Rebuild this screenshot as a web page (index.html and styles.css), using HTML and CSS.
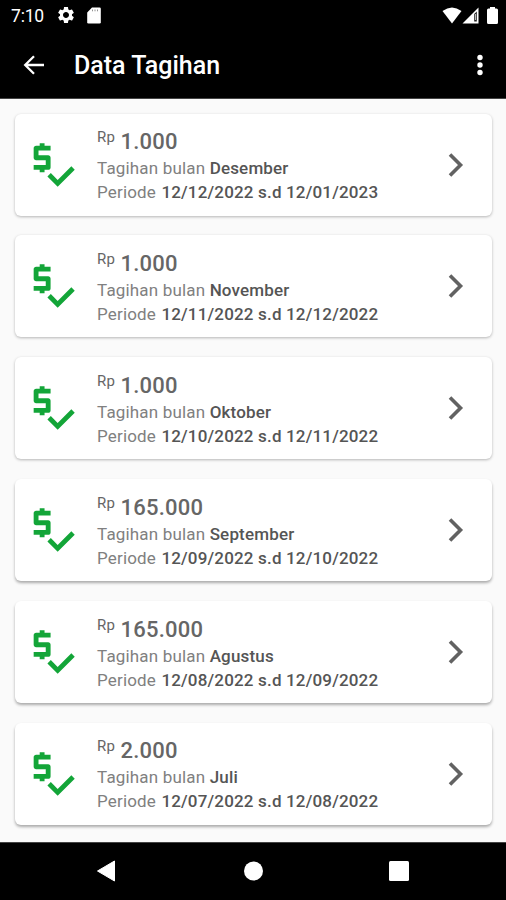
FILE: index.html
```html
<!DOCTYPE html>
<html lang="id">
<head>
    <meta charset="UTF-8">
    <title>Data Tagihan</title>
    <link rel="stylesheet" href="styles.css">
</head>
<body>
<svg class="defs" width="0" height="0">
    <symbol id="paid" viewBox="0 0 24 24">
        <path d="M11 13V9c0-.55-.45-1-1-1H6V6h5V4H8.500V3h-2v1H5c-.55 0-1 .45-1 1v4c0 .55.45 1 1 1h4v2H4v2h2.500v1h2v-1H10c.55 0 1-.45 1-1zM19.590 12.520l-5.660 5.650-2.830-2.830-1.410 1.420L13.930 21 21 13.930z"/>
    </symbol>
    <symbol id="chevron" viewBox="0 0 16 24">
        <path d="M2 1.500L12.500 12 2 22.500" fill="none" stroke="#626262" stroke-width="3.600"/>
    </symbol>
</svg>
<div class="screen">
    <div class="status">
        <span class="clock">7:10</span>
        <svg class="gear" width="20" height="20" viewBox="0 0 24 24"><path d="M19.140 12.940c.04-.3.06-.61.06-.94 0-.32-.02-.64-.07-.94l2.030-1.580c.18-.14.23-.41.12-.61l-1.920-3.320c-.12-.22-.37-.29-.59-.22l-2.390.96c-.5-.38-1.030-.7-1.620-.94l-.36-2.540c-.04-.24-.24-.41-.48-.41h-3.840c-.24 0-.43.17-.47.41l-.36 2.540c-.59.24-1.130.57-1.620.94l-2.390-.96c-.22-.08-.47 0-.59.22L2.740 8.870c-.12.21-.08.47.12.61l2.030 1.580c-.05.3-.09.63-.09.94s.02.64.07.94l-2.030 1.580c-.18.14-.23.41-.12.61l1.920 3.320c.12.22.37.29.59.22l2.390-.96c.5.38 1.030.7 1.620.94l.36 2.540c.05.24.24.41.48.41h3.840c.24 0 .44-.17.47-.41l.36-2.540c.59-.24 1.130-.56 1.620-.94l2.390.96c.22.08.47 0 .59-.22l1.920-3.320c.12-.22.07-.47-.12-.61zM12 15.600c-1.980 0-3.600-1.620-3.600-3.600s1.620-3.600 3.600-3.600 3.600 1.620 3.600 3.600-1.620 3.600-3.600 3.600z"/></svg>
        <svg class="sd" width="14" height="17" viewBox="0 0 14 17"><path d="M5 .5h7.500q1.300 0 1.300 1.300v13.400q0 1.300-1.300 1.300h-11Q.2 16.500.2 15.200V5.500z"/><path d="M5.500 2.500v1.800M8 2.500v1.800M10.500 2.500v1.800" stroke="#777" stroke-width=".8"/></svg>
        <svg class="wifi" width="20" height="17" viewBox="0 0 20 17"><path d="M.5 4Q10-3.200 19.500 4L10 16.500z"/></svg>
        <svg class="signal" width="17" height="17" viewBox="0 0 17 17"><path d="M.5 16.500L16.500.5v16z"/><path d="M12.200 7v7.500h2.600V4.500z" fill="#222"/><path d="M13.500 7v6" stroke="#ccc" stroke-width=".9"/></svg>
        <svg class="battery" width="11" height="17" viewBox="0 0 11 17"><path d="M3 0h5v1.500h1.500Q11 1.800 11 3v12.500q0 1.500-1.500 1.500h-8Q0 17 0 15.500V3q0-1.200 1.500-1.500H3z"/></svg>
    </div>
    <div class="toolbar">
        <svg class="back" width="22" height="20" viewBox="0 0 22 20"><path d="M21 10H2.500M11 1.200L2.200 10l8.800 8.800" fill="none" stroke="#fff" stroke-width="2.300"/></svg>
        <h1>Data Tagihan</h1>
        <svg class="more" width="6" height="22" viewBox="0 0 6 22"><circle cx="3" cy="3.500" r="2.700"/><circle cx="3" cy="11" r="2.700"/><circle cx="3" cy="18.500" r="2.700"/></svg>
    </div>
    <div class="list">
        <div class="card">
            <svg class="paid"><use href="#paid"/></svg>
            <div class="info">
                <div class="amount"><span>Rp</span>1.000</div>
                <div class="line">Tagihan bulan <b>Desember</b></div>
                <div class="line">Periode <b class="period">12/12/2022 s.d 12/01/2023</b></div>
            </div>
            <svg class="chevron"><use href="#chevron"/></svg>
        </div>
        <div class="card">
            <svg class="paid"><use href="#paid"/></svg>
            <div class="info">
                <div class="amount"><span>Rp</span>1.000</div>
                <div class="line">Tagihan bulan <b>November</b></div>
                <div class="line">Periode <b class="period">12/11/2022 s.d 12/12/2022</b></div>
            </div>
            <svg class="chevron"><use href="#chevron"/></svg>
        </div>
        <div class="card">
            <svg class="paid"><use href="#paid"/></svg>
            <div class="info">
                <div class="amount"><span>Rp</span>1.000</div>
                <div class="line">Tagihan bulan <b>Oktober</b></div>
                <div class="line">Periode <b class="period">12/10/2022 s.d 12/11/2022</b></div>
            </div>
            <svg class="chevron"><use href="#chevron"/></svg>
        </div>
        <div class="card">
            <svg class="paid"><use href="#paid"/></svg>
            <div class="info">
                <div class="amount"><span>Rp</span>165.000</div>
                <div class="line">Tagihan bulan <b>September</b></div>
                <div class="line">Periode <b class="period">12/09/2022 s.d 12/10/2022</b></div>
            </div>
            <svg class="chevron"><use href="#chevron"/></svg>
        </div>
        <div class="card">
            <svg class="paid"><use href="#paid"/></svg>
            <div class="info">
                <div class="amount"><span>Rp</span>165.000</div>
                <div class="line">Tagihan bulan <b>Agustus</b></div>
                <div class="line">Periode <b class="period">12/08/2022 s.d 12/09/2022</b></div>
            </div>
            <svg class="chevron"><use href="#chevron"/></svg>
        </div>
        <div class="card">
            <svg class="paid"><use href="#paid"/></svg>
            <div class="info">
                <div class="amount"><span>Rp</span>2.000</div>
                <div class="line">Tagihan bulan <b>Juli</b></div>
                <div class="line">Periode <b class="period">12/07/2022 s.d 12/08/2022</b></div>
            </div>
            <svg class="chevron"><use href="#chevron"/></svg>
        </div>
    </div>
    <div class="navbar">
        <svg width="20" height="22" viewBox="0 0 20 22"><path d="M1.500 11L18.500 1v20z" stroke="#fff" stroke-width="1" stroke-linejoin="round"/></svg>
        <svg width="20" height="20" viewBox="0 0 20 20"><circle cx="10.500" cy="10" r="9.500"/></svg>
        <svg width="20" height="20" viewBox="0 0 20 20"><rect width="20" height="20" rx="1.500"/></svg>
    </div>
</div>
</body>
</html>
```
FILE: styles.css
```css
*{
    margin:0;
    padding:0;
    box-sizing:border-box;
}
body{
    font-family: Roboto, "Liberation Sans", sans-serif;
    background: #fafafa;
}
svg{
    display:block;
    flex:none;
    fill:#fff;
}
.defs{
    position: absolute;
}
.screen{
    width: 506px;
    height: 900px;
    overflow:hidden;
    display:flex;
    flex-direction:column;
}
.status{
    height: 32px;
    flex:none;
    background: #000;
    color:#fff;
    display:flex;
    align-items:center;
    padding:0 8px 2px 11px;
}
.clock{
    width: 45px;
    font-size:17.5px;
    letter-spacing:-.2px;
    line-height: 20px;
    padding-top:2px;
}
.sd{
    margin-left:11px;
}
.wifi{
    margin-left:auto;
}
.battery{
    margin-left:8px;
}
.toolbar{
    height: 67px;
    flex:none;
    background: #000;
    color:#fff;
    display:flex;
    align-items:center;
    padding:0 23px;
    border-bottom:1px solid #444;
}
.toolbar h1{
    margin-left:29px;
    padding-top:1px;
    font-size:25px;
    font-weight:500;
    line-height: 30px;
}
.back, .more{
    margin-top:-1px;
}
.more{
    margin-left:auto;
}
.list{
    flex:1;
    display:flex;
    flex-direction:column;
    gap:19.9px;
    padding:14.5px 14px 0 15px;
}
.card{
    height: 102px;
    flex:none;
    display:flex;
    align-items:center;
    padding:0 28px 0 8.500px;
    background: #fff;
    border-radius:6px;
    box-shadow:0 1px 3px rgba(0,0,0,.28);
}
.card:nth-child(n+4){
    box-shadow:0 2px 3px rgba(0,0,0,.32);
}
.paid{
    width: 58px;
    height: 58px;
    fill:#13a538;
}
.info{
    margin-left:15.5px;
    padding-top:2px;
    flex:1;
    color:#808080;
}
.amount{
    height: 29px;
    line-height: 30px;
    font-size:22px;
    font-weight:500;
    letter-spacing:.2px;
    color:#666;
}
.amount span{
    margin-right:5.5px;
    font-size:15px;
    position: relative;
    top:-7px;
    font-weight:400;
}
.line{
    height: 24px;
    line-height: 24px;
    font-size:17px;
    letter-spacing:.17px;
    white-space:nowrap;
}
.line b{
    font-weight:500;
    color:#555;
}
.line .period{
    margin-left:1px;
}
.chevron{
    width: 16px;
    height: 24px;
}
.navbar{
    height: 58px;
    flex:none;
    background: #000;
    border-top:1px solid #444;
    display:flex;
    align-items:center;
    justify-content:space-between;
    padding:0 97px 1px 96px;
}
```
